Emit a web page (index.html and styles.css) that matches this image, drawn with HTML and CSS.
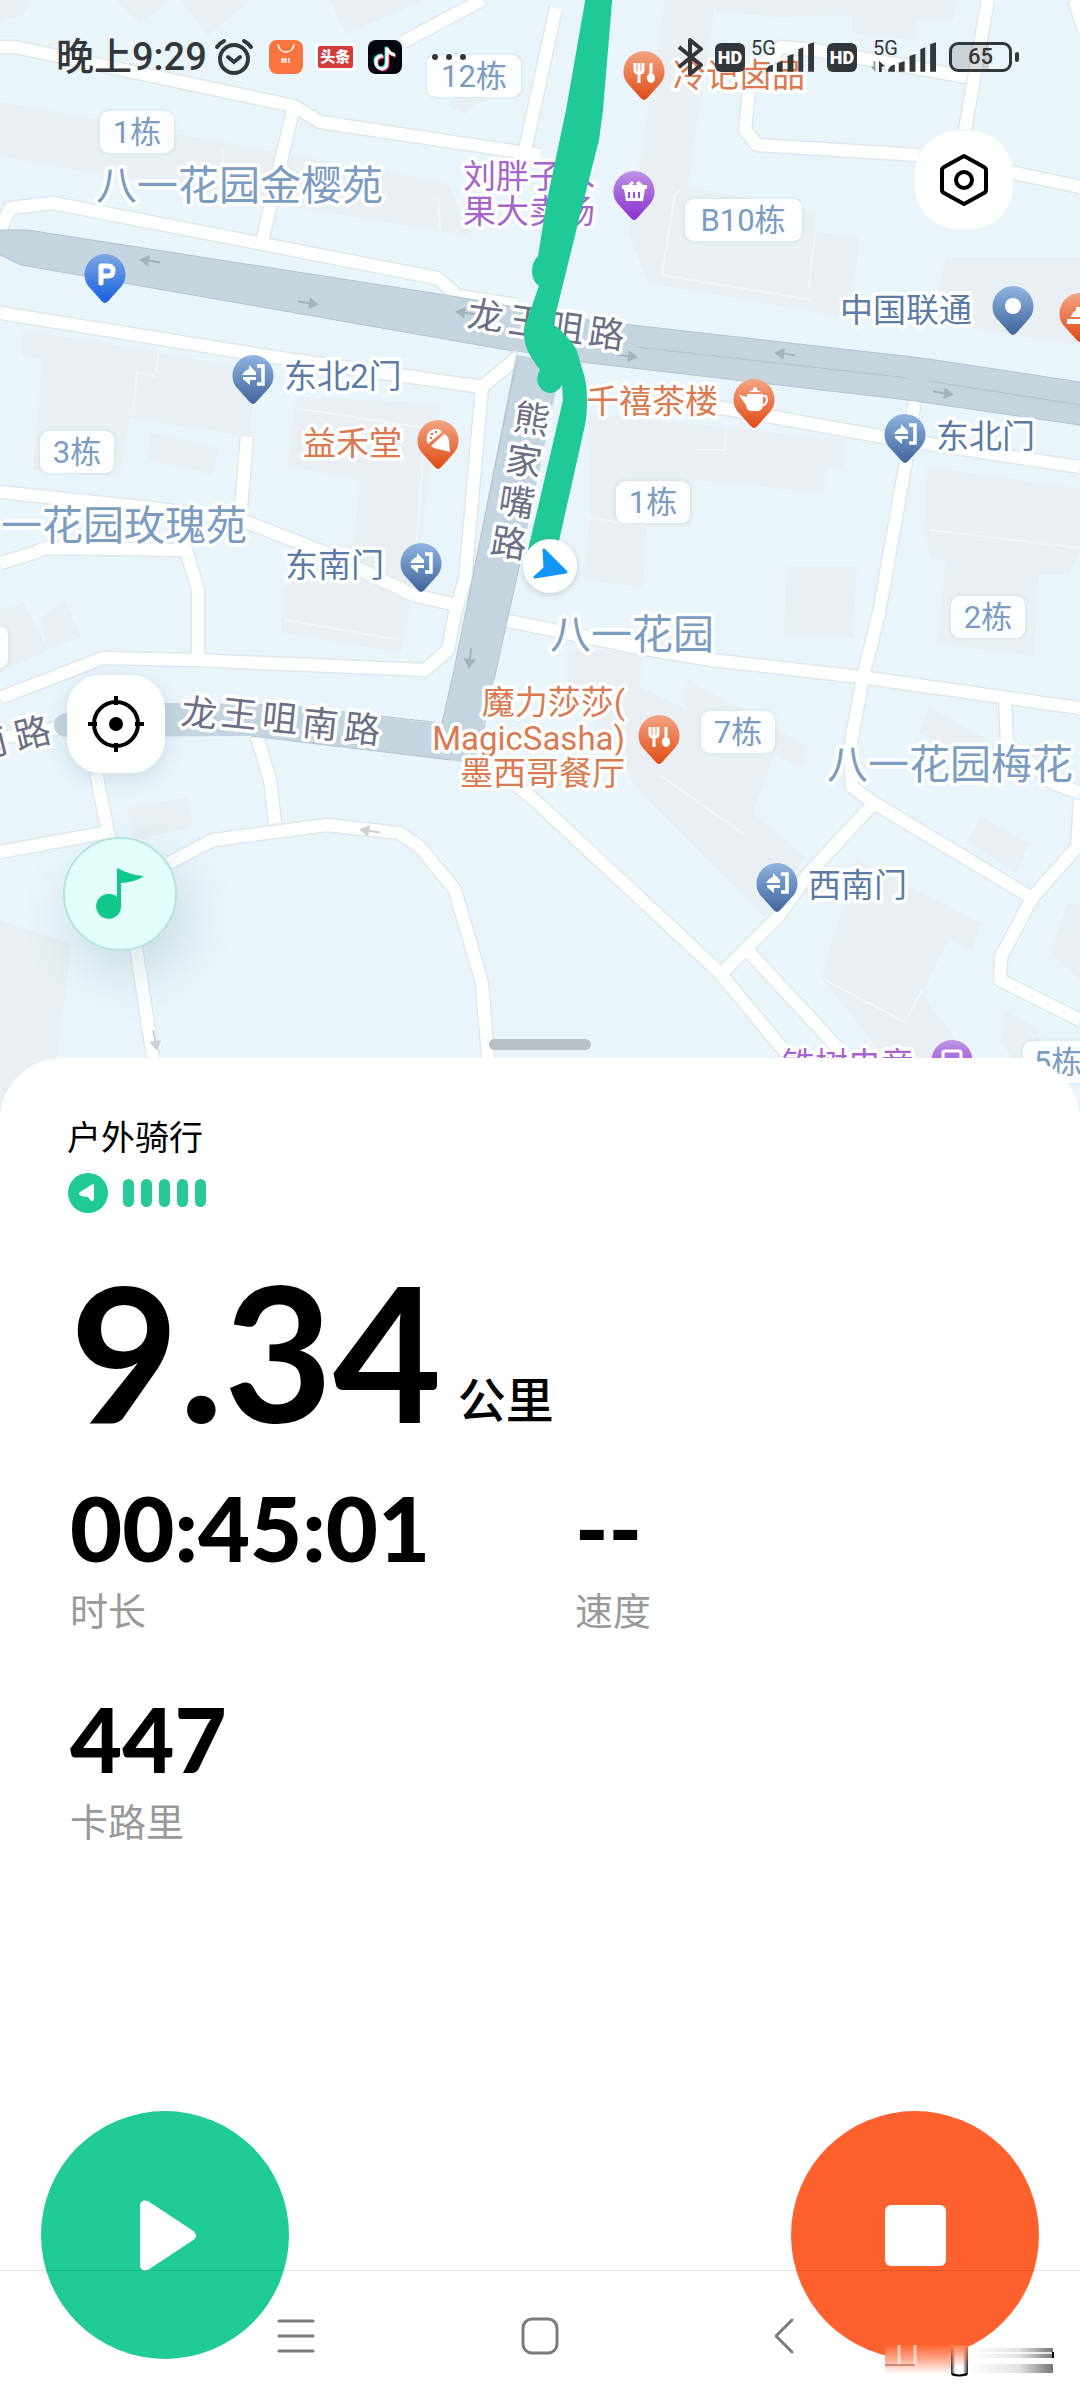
FILE: index.html
```html
<!DOCTYPE html>
<html lang="zh-CN">
<head>
  <meta charset="UTF-8" />
  <meta name="viewport" content="width=device-width, initial-scale=1" />
  <title>户外骑行</title>
  <link rel="stylesheet" href="styles.css">
</head>
<body>
  <main class="screen">

    <section class="map">
      <svg class="map-canvas" viewBox="0 0 1080 1125" role="img" aria-label="地图">
        <defs>
          <linearGradient id="orange" x1="0" y1="0" x2="0" y2="1">
            <stop offset="0" stop-color="#f3a584" /><stop offset="1" stop-color="#e04a14" />
          </linearGradient>
          <linearGradient id="blue" x1="0" y1="0" x2="0" y2="1">
            <stop offset="0" stop-color="#8fb4e0" /><stop offset="1" stop-color="#3f659c" />
          </linearGradient>
          <linearGradient id="purple" x1="0" y1="0" x2="0" y2="1">
            <stop offset="0" stop-color="#bd92e4" /><stop offset="1" stop-color="#8a2fd0" />
          </linearGradient>
          <linearGradient id="parking" x1="0" y1="0" x2="0" y2="1">
            <stop offset="0" stop-color="#7da6e6" /><stop offset="1" stop-color="#1660de" />
          </linearGradient>
          <path id="pin" d="M0 49C-2 49-4 46-6 44L-15 34C-19 30-20.500 25-20.500 20.500A20.500 20.500 0 0 1 20.500 20.500C20.500 25 19 30 15 34L6 44C4 46 2 49 0 49Z" />
          <g id="gate">
            <use href="#pin" fill="url(#blue)" />
            <path d="M4 11H10V29H4" fill="none" stroke="#fff" stroke-width="3.500" />
            <path d="M-11 20Q-8 15-4 14V10L3 17V20ZM-10 22H3V25H-3V30L-10 24Z" fill="#fff" />
          </g>
          <g id="food">
            <use href="#pin" fill="url(#orange)" />
            <path d="M-9 12V19Q-9 22-5 22Q-1 22-1 19V12M-5 12V32" fill="none" stroke="#fff" stroke-width="3" />
            <path d="M7 12V24" stroke="#fff" stroke-width="3" />
            <ellipse cx="7" cy="27" rx="4" ry="5" fill="#fff" />
          </g>
          <path id="arrow" d="M-10-1H1V-6L11 0L1 6V1H-10Z" />
          <path id="streets" d="M0 47H15L294 106L320 122L540 155M293 110L263 238M0 230L10 208L53 203L437 278L458 296L517 305M482 0L403 42M556 8L524 155
            M0 313L293 360L482 387L518 357M482 387L465 580L455 613L448 650L425 670L193 660L103 658L0 698M413 595L456 605
            M0 492L150 508L241 520L324 552L413 595M247 437L240 520M0 563L34 553L45 548L186 550L198 590V660
            M680 402L722 408L884 437L1080 467M915 400L905 467L879 613L864 673L850 747L852 787L874 803L1032 898L1077 847L1080 800M1032 898L1001 957L1000 980L1080 1020
            M504 620L640 648L712 660L860 677L1080 708M1005 700L1007 743L1053 783L1080 793
            M505 775L540 805L719 972L800 1070M874 803L809 873L778 917L722 973M750 953L858 1070
            M988 0L977 60L965 130M967 77L815 50L781 47L750 80L745 130L757 145L919 155M1000 170L1080 187M1074 0L1084 30
            M96 773L108 832L0 852M169 863L213 840L327 825L399 833L420 847L455 890L482 983L489 1070M257 737L270 780L275 823M108 832L136 947L155 1070M0 738L60 728" />
        </defs>

        <rect class="land" width="1080" height="1125" />

        <g class="buildings">
          <path d="M0 0H30L25 14L0 22ZM115 0H170L140 24ZM180 0H250L208 36ZM330 0H425L345 34Z" />
          <path d="M0 102L448 183L472 237L0 157Z" />
          <path d="M22 330L158 352L255 370L250 437L130 418L120 478L33 470L42 360L22 355Z" />
          <path d="M296 397L441 403L422 530L410 610L401 653L281 632L284 587L353 543L360 480L287 467Z" />
          <path d="M150 432L219 448L213 475L148 460ZM24 603L48 650L0 673V610ZM40 618L65 600L81 637L48 649Z" />
          <path d="M665 0H716L688 187L816 212L814 232L860 237L850 318L648 283L628 233L640 160Z" />
          <path d="M716 0H957L953 20H917L915 40L852 33V15L778 17L716 12Z" />
          <path d="M946 257H1080V345L930 322ZM448 105L488 60L490 95L465 114Z" />
          <path d="M588 413L846 440L845 468L826 470L824 493L695 480L691 527H647L643 587L583 580L590 513Z" />
          <path d="M786 567H857L853 638L784 637Z" />
          <path d="M927 467L1080 488V550L1069 575H1039L1034 657L936 643L946 560L931 558L924 530Z" />
          <path d="M567 650H643L640 687L688 710L682 700L688 680L809 747L802 768L774 755L753 813L805 857L764 917L636 787L566 677Z" />
          <path d="M929 707L1001 747L995 765L919 733ZM981 817L1029 843L1017 873L967 842Z" />
          <path d="M857 860L981 923L972 950L948 940L922 993L977 1070H895L821 977Z" />
          <path d="M1005 1010L1036 1027L1050 1070H1020L1000 1040ZM1067 903L1080 905V980L1050 953Z" />
          <path d="M127 808L189 797L193 827L134 840ZM0 920L71 943L50 1125H0Z" />
        </g>
        <g class="seams">
          <path d="M222 150L225 190M438 195L440 230M158 352L155 376L137 373L133 415M296 408L425 428L412 605M284 620L400 640" />
          <path d="M680 190L675 195L662 275L812 300M815 232L808 290M727 418L725 450L697 450M590 518L647 527M930 530L1080 548M660 775L745 835M825 980L905 1022L922 990" />
        </g>

        <use href="#streets" class="street-edge" />
        <use href="#streets" class="street" />

        <g class="highway">
          <path d="M516 355L562 362L520 563L494 680L478 764L434 758L442 723L454 670Z" />
          <path d="M66 713L165 703L272 704L442 724L478 730V764L451 760L251 736L66 737Q54 735 54 725Q54 715 66 713Z" />
          <path d="M0 230H28L458 297L588 320L922 358L1080 382V425L908 400L581 362L513 351L21 265L0 255Z" />
        </g>
        <path class="lane" d="M636 347L908 378M929 381L1080 405" />
        <path class="curb" d="M0 230H28L458 297L588 320L922 358L1080 382M1080 425L908 400L581 362M513 351L21 265L0 255M516 363L454 670L442 723L272 704M520 563L494 680M251 736L451 760" />

        <g class="arrows">
          <use href="#arrow" transform="translate(150 261) rotate(188)" />
          <use href="#arrow" transform="translate(308 303) rotate(8)" />
          <use href="#arrow" transform="translate(466 313) rotate(188)" />
          <use href="#arrow" transform="translate(627 356) rotate(7)" />
          <use href="#arrow" transform="translate(785 354) rotate(187)" />
          <use href="#arrow" transform="translate(943 393) rotate(8)" />
          <use href="#arrow" transform="translate(470 658) rotate(97)" />
        </g>
        <g class="arrows arrows-light">
          <use href="#arrow" transform="translate(370 831) rotate(188)" />
          <use href="#arrow" transform="translate(155 1040) rotate(80)" />
        </g>

        <g class="road-name">
          <text x="466 507 547 587" y="326 332 338 344" rotate="8">龙王咀路</text>
          <text x="180 220 261 301 343" y="724 725 729 735 740" rotate="6">龙王咀南路</text>
          <text x="512 504 497 489" y="429 471 512 553" rotate="9">熊家嘴路</text>
          <text x="-25 18" y="760 750" rotate="-14">南路</text>
        </g>

        <g class="area">
          <text x="96" y="200">八一花园金樱苑</text>
          <text x="1" y="540">一花园玫瑰苑</text>
          <text x="550" y="649">八一花园</text>
          <text x="827" y="779">八一花园梅花</text>
        </g>

        <g class="place">
          <text x="284" y="388">东北2门</text>
          <text x="285" y="577">东南门</text>
          <text x="936" y="448">东北门</text>
          <text x="808" y="897">西南门</text>
          <text x="840" y="322">中国联通</text>
        </g>
        <g class="place place-food">
          <text x="673" y="87">冷记卤品</text>
          <text x="303" y="455">益禾堂</text>
          <text x="586" y="413">千禧茶楼</text>
          <g text-anchor="end">
            <text x="625" y="714">魔力莎莎(</text>
            <text x="625" y="750">MagicSasha)</text>
            <text x="625" y="785">墨西哥餐厅</text>
          </g>
        </g>
        <g class="place place-shop">
          <text x="463" y="188">刘胖子水</text>
          <text x="463" y="223">果大卖场</text>
          <text x="782" y="1076">铁树电竞</text>
        </g>

        <g class="badge">
          <rect x="427" y="55" width="94" height="42" rx="9" /><text x="474" y="87">12栋</text>
          <rect x="100" y="111" width="74" height="42" rx="9" /><text x="137" y="143">1栋</text>
          <rect x="40" y="431" width="74" height="42" rx="9" /><text x="77" y="463">3栋</text>
          <rect x="616" y="481" width="74" height="42" rx="9" /><text x="653" y="513">1栋</text>
          <rect x="951" y="596" width="74" height="42" rx="9" /><text x="988" y="628">2栋</text>
          <rect x="701" y="711" width="74" height="42" rx="9" /><text x="738" y="743">7栋</text>
          <rect x="685" y="199" width="117" height="42" rx="9" /><text x="743" y="231">B10栋</text>
          <rect x="1023" y="1041" width="74" height="42" rx="9" /><text x="1058" y="1073">5栋</text>
          <rect x="-66" y="626" width="74" height="42" rx="9" />
        </g>

        <use href="#gate" x="253" y="355" />
        <use href="#gate" x="421" y="543" />
        <use href="#gate" x="905" y="414" />
        <use href="#gate" x="777" y="863" />
        <use href="#food" x="644" y="51" />
        <use href="#food" x="659" y="715" />
        <g transform="translate(105 254)">
          <use href="#pin" fill="url(#parking)" />
          <path d="M-4 29V12H3Q8 12 8 17Q8 22 3 22H-4" fill="none" stroke="#fff" stroke-width="5" stroke-linejoin="round" stroke-linecap="round" />
        </g>
        <g transform="translate(1013 286)">
          <use href="#pin" fill="url(#blue)" />
          <circle cy="20" r="8" fill="#fff" />
        </g>
        <g transform="translate(438 420)">
          <use href="#pin" fill="url(#orange)" />
          <path d="M-10 24C-14 15-8 9-2 9Q2 9 4 12ZM-7 26L6 14C9 15 11 18 11 21L12 32L-4 28Z" fill="#fff" />
          <path d="M-7 14h2M-3 12h2M-8 18h2" stroke="#e8693a" stroke-width="2" />
        </g>
        <g transform="translate(754 379)">
          <use href="#pin" fill="url(#orange)" />
          <path d="M-7 15H9V25Q9 32 4 32H-3Q-7 32-8 26L-15 16L-7 18ZM-5 13Q1 8 7 13Z" fill="#fff" />
          <path d="M9 17H12Q15 23 9 27" fill="none" stroke="#fff" stroke-width="2" />
          <circle cx="1" cy="10" r="2" fill="#fff" />
        </g>
        <g transform="translate(1080 293)">
          <use href="#pin" fill="url(#orange)" />
          <path d="M-13 26H10V31H-13ZM-9 24Q-7 16 0 17V24ZM-4 14H4V18H-4Z" fill="#fff" />
        </g>
        <g transform="translate(634 171)">
          <use href="#pin" fill="url(#purple)" />
          <path d="M-12 14H-6L-2 10L0 12L-2 14H3L2 12L5 10L9 14H13V18H11L9 30H-8L-10 18H-12Z" fill="#fff" />
          <path d="M-5 21V27M0 21V27M5 21V27" stroke="#9a4fd6" stroke-width="2" />
        </g>
        <g transform="translate(952 1040)">
          <use href="#pin" fill="url(#purple)" />
          <rect x="-9" y="11" width="18" height="15" rx="2" fill="none" stroke="#fff" stroke-width="3" />
        </g>

        <path class="route" d="M587-10L566 110L547 200L538 256Q532 262 532 271Q532 281 539 286L524 328Q523 344 530 355Q535 364 540 370Q535 378 539 386Q544 394 552 393Q559 391 562 385L563 400L528 550H557L585 425Q587 415 587 400Q587 384 584 375L577 351Q572 341 565 335Q558 326 553 325L580 215L599 140L603 110L613-10Z" />
        <g class="position">
          <circle cx="550" cy="566" r="27" />
          <path d="M544 550L566 572L535 577L545 568Z" />
        </g>
      </svg>

      <header class="status-bar">
        <div class="status-left">
          <time class="clock">晚上9:29</time>
          <svg class="icon-alarm" viewBox="0 0 40 40" aria-hidden="true">
            <g fill="none" stroke="#333739" stroke-width="4" stroke-linecap="round">
              <circle cx="20" cy="22" r="14" /><path d="M14 20L20 25L26 20M3 10Q6 6 10 4M37 10Q34 6 30 4" />
            </g>
          </svg>
          <svg class="icon-app" viewBox="0 0 34 34" aria-hidden="true">
            <rect width="34" height="34" rx="8" fill="#fb7440" />
            <path d="M9 4Q10 12 17 12Q24 12 25 4" fill="none" stroke="#fff" stroke-width="1.500" />
            <path d="M13 23V19H17V23M15 20V23M20 18V23" fill="none" stroke="#fff" stroke-width="1.300" />
          </svg>
          <span class="icon-toutiao">头条</span>
          <svg class="icon-app" viewBox="0 0 34 34" aria-hidden="true">
            <rect width="34" height="34" rx="8" fill="#04060f" />
            <g fill="none" stroke-width="3">
              <path d="M14 15Q7 15 7 21Q7 27 13 28Q18 27 18 22V7Q20 13 26 14" stroke="#2ee6e2" />
              <path d="M16 17Q9 17 9 23Q9 29 15 30Q20 29 20 24V9Q22 15 28 16" stroke="#f5305c" />
              <path d="M15 16Q8 16 8 22Q8 28 14 29Q19 28 19 23V8Q21 14 27 15" stroke="#fff" />
            </g>
          </svg>
          <span class="more-dots"><i></i><i></i><i></i></span>
        </div>
        <div class="status-right">
          <svg class="icon-bt" viewBox="0 0 26 38" aria-hidden="true">
            <path d="M2 9L24 27L13 36V2L24 11L2 29" fill="none" stroke="#333739" stroke-width="4" stroke-linejoin="round" />
          </svg>
          <span class="signal-group">
            <span class="hd">HD</span>
            <span class="signal">
              <span class="network">5G</span>
              <svg class="icon-signal" viewBox="0 0 50 30" aria-hidden="true">
                <path d="M0 30Q1 23 7 23V30ZM11 30V21L17 19V30ZM22 30V14L28 12V30ZM33 30V7L38 5V30ZM43 30V2L49 0V30Z" />
              </svg>
            </span>
          </span>
          <span class="signal-group signal-data">
            <span class="hd">HD</span>
            <span class="signal">
              <span class="network">5G</span>
              <svg class="icon-data" viewBox="0 0 18 12" aria-hidden="true">
                <path d="M5 0V12L0 6H3V0Z" fill="#9aa1a5" /><path d="M9 12V0L16 6H12V12Z" />
              </svg>
              <svg class="icon-signal" viewBox="0 0 50 30" aria-hidden="true">
                <path d="M0 30Q1 23 7 23V30ZM11 30V21L17 19V30ZM22 30V14L28 12V30ZM33 30V7L38 5V30ZM43 30V2L49 0V30Z" />
              </svg>
            </span>
          </span>
          <span class="battery">65</span>
        </div>
      </header>

      <button class="map-btn settings" type="button" aria-label="设置">
        <svg viewBox="0 0 56 56">
          <path d="M28 4L48 15Q50 16 50 18V38Q50 40 48 41L28 52L8 41Q6 40 6 38V18Q6 16 8 15Z" fill="none" stroke="#000" stroke-width="4" stroke-linejoin="round" />
          <circle cx="28" cy="28" r="8" fill="none" stroke="#000" stroke-width="4" />
        </svg>
      </button>
      <div class="side-tools">
        <button class="map-btn locate" type="button" aria-label="定位">
          <svg viewBox="0 0 56 56">
            <g fill="none" stroke="#000" stroke-width="4">
              <circle cx="28" cy="28" r="22" /><path d="M28 0V9M28 47V56M0 28H9M47 28H56" />
            </g>
            <circle cx="28" cy="28" r="7" />
          </svg>
        </button>
        <button class="music" type="button" aria-label="音乐">
          <svg viewBox="0 0 52 54">
            <path d="M23 1Q36 8 50 9Q42 15 27 16V41A12.500 12.500 0 1 1 23 30Z" fill="#10c78c" />
          </svg>
        </button>
      </div>
    </section>

    <section class="sheet">
      <span class="handle"></span>
      <h1 class="sport">户外骑行</h1>
      <div class="gps" role="img" aria-label="GPS 信号强">
        <svg class="gps-icon" viewBox="0 0 40 40" aria-hidden="true">
          <circle cx="20" cy="20" r="20" fill="#1fca97" />
          <path d="M25 11Q26 11 26 13V26Q25 29 23 28L20 24L13 23Q10 21 12 19Z" fill="#fff" />
        </svg>
        <i></i><i></i><i></i><i></i><i></i>
      </div>

      <p class="distance">9.34<span class="unit">公里</span></p>

      <dl class="metrics">
        <div><dt>时长</dt><dd>00:45:01</dd></div>
        <div><dt>速度</dt><dd>--</dd></div>
        <div><dt>卡路里</dt><dd>447</dd></div>
      </dl>

      <div class="actions">
        <button class="round resume" type="button" aria-label="继续">
          <svg viewBox="0 0 60 74"><path d="M1 6Q2 0 9 2L56 33Q60 37 56 41L9 72Q2 74 1 68Z" fill="#fff" /></svg>
        </button>
        <button class="round stop" type="button" aria-label="结束"><span></span></button>
      </div>
    </section>

    <nav class="nav-bar">
      <a href="#recent" aria-label="最近任务">
        <svg viewBox="0 0 40 40"><path d="M3 5H37M3 20H37M3 35H37" /></svg>
      </a>
      <a href="#home" aria-label="主页">
        <svg viewBox="0 0 40 40"><rect x="3" y="3" width="34" height="34" rx="9" /></svg>
      </a>
      <a href="#back" aria-label="返回">
        <svg viewBox="0 0 40 40"><path d="M28 4L12 20L28 36" /></svg>
      </a>
    </nav>

    <svg class="smear" viewBox="0 0 170 34" aria-hidden="true">
      <defs>
        <linearGradient id="fade" x1="0" x2="1">
          <stop offset="0" stop-color="#fff" /><stop offset=".6" stop-color="#e2e2e2" /><stop offset="1" stop-color="#777" />
        </linearGradient>
        <linearGradient id="wash" x1="0" y1="0" x2="0" y2="1">
          <stop offset="0" stop-color="#ff6430" /><stop offset=".5" stop-color="#ffab90" /><stop offset="1" stop-color="#fff" />
        </linearGradient>
        <linearGradient id="post" x1="0" x2="1">
          <stop offset="0" stop-color="#222" /><stop offset=".25" stop-color="#fff" /><stop offset=".7" stop-color="#fff" /><stop offset="1" stop-color="#222" />
        </linearGradient>
        <linearGradient id="post-top" x1="0" y1="0" x2="0" y2="1">
          <stop offset="0" stop-color="#ff7a4c" /><stop offset="1" stop-color="#ff7a4c" stop-opacity="0" />
        </linearGradient>
      </defs>
      <rect width="66" height="29" fill="url(#wash)" />
      <path d="M14 0V20M30 0V20" stroke="#fff" stroke-width="3" opacity=".6" />
      <path d="M0 20H30" stroke="#7a2a18" stroke-width="2" opacity=".4" />
      <rect x="84" y="3" width="84" height="10" fill="url(#fade)" />
      <rect x="84" y="19" width="84" height="9" fill="url(#fade)" />
      <path d="M84 8H168" stroke="#fff" stroke-width="2" opacity=".8" />
      <rect x="66" width="17" height="31" rx="3" fill="url(#post)" />
      <rect x="66" width="17" height="22" fill="url(#post-top)" />
      <path d="M67 29Q74 32 82 29M168 7V13" fill="none" stroke="#000" stroke-width="2" />
    </svg>
  </main>
</body>
</html>
```

FILE: styles.css
```css
* {
  box-sizing: border-box;
}

body {
  margin: 0;
  background: #fff;
  color: #000;
  font-family: Roboto, "Noto Sans CJK SC", sans-serif;
}

button {
  border: none;
  padding: 0;
  cursor: pointer;
}

.screen {
  position: relative;
  display: flex;
  flex-direction: column;
  min-height: 100vh;
  overflow: hidden;
}

/* map */

.map {
  position: relative;
}

.map-canvas {
  display: block;
  width: 100%;
  height: auto;
}

.land { fill: #e9f5fb; }
.buildings { fill: #e9eff2; }

.seams {
  fill: none;
  stroke: #f1f6f8;
  stroke-width: 2;
}

.street,
.street-edge {
  fill: none;
  stroke-linejoin: round;
}

.street-edge {
  stroke: #e1e8ec;
  stroke-width: 15;
}

.street {
  stroke: #fff;
  stroke-width: 12;
}

.highway {
  fill: #c5d5df;
}

.lane,
.curb {
  fill: none;
  stroke: #b3c3cd;
  stroke-width: 1;
}

.arrows { fill: #a3b3be; }
.arrows-light { fill: #ccd0d4; }

.map-canvas text {
  paint-order: stroke;
  stroke: #fff;
  stroke-width: 7px;
  stroke-linejoin: round;
}

.road-name {
  font-size: 36px;
  fill: #6c7085;
}

.area {
  font-size: 41px;
  fill: #7c9cc0;
}

.place {
  font-size: 33px;
  fill: #5c7ba5;
}

.place-food { fill: #d97a50; }
.place-shop { fill: #a765cb; }

.badge rect {
  fill: #fbfdfe;
  filter: drop-shadow(0 0 2px rgba(120, 150, 170, 0.2));
}

.map-canvas .badge text {
  font-size: 31px;
  fill: #7c9cc0;
  stroke: none;
  text-anchor: middle;
}

.route {
  fill: #1fca97;
}

.position circle {
  fill: #fff;
  filter: drop-shadow(0 2px 3px rgba(0, 0, 0, 0.15));
}

.position path {
  fill: #1296f5;
  stroke: #1296f5;
  stroke-width: 3;
  stroke-linejoin: round;
}

/* status bar */

.status-bar {
  position: absolute;
  top: 0;
  left: 0;
  right: 0;
  height: 114px;
  padding: 0 62px 0 56px;
  display: flex;
  align-items: center;
  justify-content: space-between;
  color: #333739;
  fill: #333739;
}

.status-left,
.status-right {
  display: flex;
  align-items: center;
}

.status-left { gap: 15px; }
.status-right { gap: 12px; }

.clock {
  font-size: 38px;
  font-weight: 500;
  line-height: 48px;
}

.icon-alarm {
  width: 40px;
  height: 40px;
  margin-left: -8px;
}

.icon-app {
  width: 34px;
  height: 34px;
}

.icon-toutiao {
  width: 35px;
  line-height: 22px;
  background: #d63a3c;
  box-shadow: 0 0 0 3px #fff;
  border-radius: 2px;
  color: #fff;
  font-size: 15px;
  font-weight: 900;
  text-align: center;
}

.more-dots {
  display: flex;
  gap: 8px;
  margin-left: 15px;
}

.more-dots i {
  width: 6px;
  height: 6px;
  border-radius: 50%;
  background: #333739;
}

.icon-bt {
  width: 26px;
  height: 38px;
}

.signal-group {
  display: flex;
  align-items: center;
  gap: 6px;
}

.signal-group.signal-data {
  gap: 12px;
}

.hd {
  width: 30px;
  line-height: 29px;
  border-radius: 6px;
  background: #333739;
  color: #fff;
  font-size: 18px;
  font-weight: 900;
  text-align: center;
}

.signal {
  position: relative;
  width: 64px;
  height: 38px;
  display: flex;
  align-items: flex-end;
  justify-content: flex-end;
}

.signal-data .signal {
  width: 68px;
}

.network {
  position: absolute;
  top: 0;
  left: 0;
  font-size: 20px;
  line-height: 20px;
}

.signal-data .network {
  left: 4px;
}

.icon-signal {
  width: 49px;
  height: 30px;
  margin-bottom: 4px;
}

.icon-data {
  width: 18px;
  height: 11px;
  margin-bottom: 4px;
}

.battery {
  position: relative;
  width: 63px;
  height: 30px;
  margin-right: 6px;
  border: 3px solid #333739;
  border-radius: 9px;
  background: linear-gradient(90deg, rgba(51, 55, 57, 0.18) 65%, transparent 65%) content-box;
  font-size: 22px;
  font-weight: 500;
  line-height: 24px;
  text-align: center;
}

.battery::after {
  content: "";
  position: absolute;
  right: -10px;
  top: 7px;
  width: 4px;
  height: 10px;
  border-radius: 2px;
  background: #333739;
}

/* floating map controls */

.map-btn {
  width: 98px;
  height: 98px;
  display: grid;
  place-items: center;
  background: #fff;
}

.map-btn svg {
  width: 56px;
  height: 56px;
}

.settings {
  position: absolute;
  top: 131px;
  right: 67px;
  border-radius: 42px;
}

.side-tools {
  position: absolute;
  top: 675px;
  left: 63px;
  display: flex;
  flex-direction: column;
  gap: 64px;
}

.locate {
  margin-left: 4px;
  border-radius: 34px;
  box-shadow: 0 6px 20px rgba(80, 110, 130, 0.18);
}

.music {
  width: 114px;
  height: 114px;
  display: grid;
  place-items: center;
  border: 2px solid #b5e5da;
  border-radius: 50%;
  background: #e3fdfb;
  box-shadow: 10px 22px 50px rgba(90, 130, 150, 0.22);
}

.music svg {
  width: 52px;
  height: 54px;
}

/* workout sheet */

.sheet {
  position: relative;
  flex: 1;
  display: flex;
  flex-direction: column;
  margin-top: -67px;
  padding-top: 60px;
  border-radius: 62px 62px 0 0;
  background: #fff;
}

.handle {
  position: absolute;
  top: -19px;
  left: 50%;
  width: 102px;
  height: 11px;
  margin-left: -51px;
  border-radius: 6px;
  background: #b9c1c7;
}

.sport {
  margin: 0 67px;
  font-size: 34px;
  font-weight: 400;
  line-height: 40px;
}

.gps {
  display: flex;
  align-items: center;
  gap: 7px;
  margin: 15px 68px 0;
}

.gps-icon {
  width: 40px;
  height: 40px;
  margin-right: 8px;
}

.gps i {
  width: 11px;
  height: 28px;
  border-radius: 6px;
  background: #2ac797;
}

.distance {
  display: flex;
  align-items: baseline;
  gap: 16px;
  margin: 43px 70px 0;
  font-family: Lato, "Noto Sans CJK SC", sans-serif;
  font-size: 188px;
  font-weight: 700;
  line-height: 188px;
}

.unit {
  padding-bottom: 8px;
  align-self: flex-end;
  font-size: 48px;
  font-weight: 500;
  line-height: 72px;
}

.metrics {
  display: grid;
  grid-template-columns: 1fr 1fr;
  row-gap: 59px;
  margin: 39px 0 0 70px;
}

/* the value is shown above its label */
.metrics div {
  display: flex;
  flex-direction: column-reverse;
}

.metrics dd {
  margin: 0;
  font-family: Lato, sans-serif;
  font-size: 90px;
  font-weight: 900;
  line-height: 88px;
}

.metrics dt {
  margin-top: 18px;
  color: #999;
  font-size: 38px;
  font-weight: 400;
  line-height: 46px;
}

.actions {
  display: flex;
  justify-content: space-between;
  margin-top: auto;
  padding: 41px;
}

.round {
  width: 248px;
  height: 248px;
  display: grid;
  place-items: center;
  border-radius: 50%;
}

.resume { background: #20cb97; }
.stop { background: #ff612e; }

.resume svg {
  width: 59px;
  height: 73px;
  margin-left: 6px;
}

.stop span {
  width: 61px;
  height: 61px;
  border-radius: 6px;
  background: #fff;
}

/* system navigation, drawn over the bottom of the sheet */

.nav-bar {
  position: absolute;
  left: 0;
  right: 0;
  bottom: 0;
  height: 130px;
  display: flex;
  align-items: center;
  justify-content: center;
  gap: 204px;
  border-top: 1px solid rgba(0, 0, 0, 0.1);
  pointer-events: none;
}

.nav-bar a {
  pointer-events: auto;
}

.nav-bar svg {
  display: block;
  width: 40px;
  height: 40px;
  fill: none;
  stroke: #7b7b7b;
  stroke-width: 3;
  stroke-linecap: round;
  stroke-linejoin: round;
}

.smear {
  position: absolute;
  right: 25px;
  bottom: 21px;
  width: 170px;
  height: 34px;
}
```
